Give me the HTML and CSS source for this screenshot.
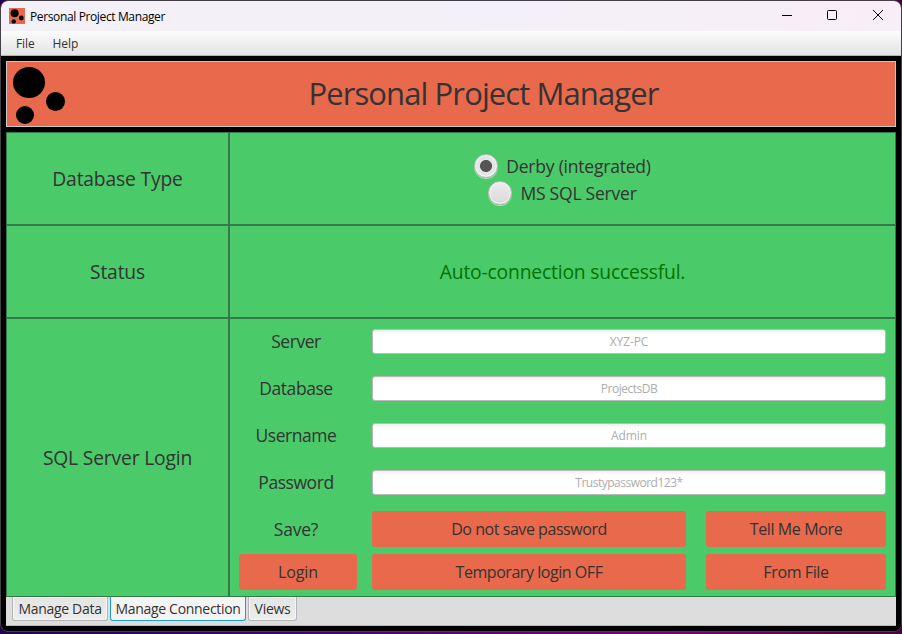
FILE: index.html
```html
<!DOCTYPE html>
<html lang="en">
<head>
<meta charset="utf-8">
<title>Personal Project Manager</title>
<link rel="stylesheet" href="styles.css">
</head>
<body>
<div class="window">
  <header class="titlebar">
    <svg class="app-icon" width="16" height="16" viewBox="0 0 16 16"><rect width="16" height="16" fill="#e8694b"/><circle cx="5.6" cy="5.3" r="4"/><circle cx="12.3" cy="10" r="2.4"/><circle cx="4.7" cy="13.4" r="2.2"/></svg>
    <span class="app-name">Personal Project Manager</span>
    <div class="controls">
      <svg width="46" height="30" viewBox="0 0 46 30"><path d="M18 14.5h10" stroke="#000"/></svg>
      <svg width="46" height="30" viewBox="0 0 46 30"><rect x="17.5" y="9.5" width="9" height="9" rx="1" fill="none" stroke="#000"/></svg>
      <svg width="46" height="30" viewBox="0 0 46 30"><path d="M17 9l10 10M27 9l-10 10" stroke="#000"/></svg>
    </div>
  </header>
  <nav class="menubar"><span>File</span><span>Help</span></nav>
  <main class="content">
    <div class="banner">
      <svg class="logo" width="62" height="64" viewBox="0 0 62 64"><ellipse cx="22" cy="20.5" rx="16" ry="15.5"/><circle cx="48.5" cy="39.5" r="9.5"/><circle cx="18" cy="53" r="9"/></svg>
      <h1>Personal Project Manager</h1>
    </div>
    <div class="panel">
      <div class="cell"><span>Database Type</span></div>
      <div class="cell radios">
        <div class="radio"><i class="dot on"></i><span>Derby (integrated)</span></div>
        <div class="radio"><i class="dot"></i><span>MS SQL Server</span></div>
      </div>
      <div class="cell"><span>Status</span></div>
      <div class="cell ok"><span>Auto-connection successful.</span></div>
      <div class="cell"><span>SQL Server Login</span></div>
      <div class="cell form">
        <div class="label"><span>Server</span></div><div class="field"><span>XYZ-PC</span></div>
        <div class="label"><span>Database</span></div><div class="field tight"><span>ProjectsDB</span></div>
        <div class="label"><span>Username</span></div><div class="field"><span>Admin</span></div>
        <div class="label"><span>Password</span></div><div class="field tight"><span>Trustypassword123*</span></div>
        <div class="label tall"><span>Save?</span></div>
        <div class="button"><span>Do not save password</span></div>
        <div class="button last"><span>Tell Me More</span></div>
        <div class="button login"><span>Login</span></div>
        <div class="button"><span>Temporary login OFF</span></div>
        <div class="button last"><span>From File</span></div>
      </div>
    </div>
    <div class="tabs">
      <div class="tab data"><span>Manage Data</span></div>
      <div class="tab active"><span>Manage Connection</span></div>
      <div class="tab views"><span>Views</span></div>
    </div>
  </main>
</div>
</body>
</html>
```
FILE: styles.css
```css
* { box-sizing: border-box; }
body {
  margin: 0;
  width: 902px;
  height: 634px;
  overflow: hidden;
  font-family: "Open Sans", "Noto Sans", sans-serif;
  color: #333;
  background: linear-gradient(90deg, #25004f, #45006d 35%, #750070 75%, #4a003d);
}
span { white-space: nowrap; }
svg { display: block; }
.window {
  width: 902px;
  height: 632px;
  border: 1px solid #454047;
  border-radius: 8px;
  overflow: hidden;
  background: #000;
}
.titlebar {
  display: flex;
  align-items: center;
  height: 30px;
  padding-left: 8px;
  background: linear-gradient(90deg, #f3f0f8, #f3f0f8 50%, #f8eef7);
  color: #000;
  font-size: 12px;
}
.app-name { margin-left: 5px; letter-spacing: -.37px; }
.controls { display: flex; margin: 0 -1px 0 auto; }
.menubar {
  display: flex;
  align-items: center;
  gap: 18px;
  height: 25px;
  padding-left: 15px;
  background: linear-gradient(#fcfcfc, #e3e3e3);
  border-bottom: 1px solid #b5b5b5;
  font-size: 12px;
  letter-spacing: -.1px;
}
.content { padding: 5px; }
.banner {
  display: flex;
  width: 890px;
  height: 66px;
  border: 1px solid #c8c8c8;
  background: #e8694b;
}
.banner h1 {
  flex: 1;
  margin: 0;
  padding-left: 3px;
  text-align: center;
  font-size: 31px;
  font-weight: 400;
  line-height: 63px;
  letter-spacing: -.9px;
}
.panel {
  display: grid;
  grid-template: 93px 93px 279px / 223px 667px;
  width: 890px;
  margin-top: 5px;
  background: #4bca6a;
}
.cell {
  display: flex;
  align-items: center;
  justify-content: center;
  border: 1px solid #35794a;
  font-size: 19.3px;
  letter-spacing: -.18px;
}
.ok { color: #007300; }
.radios { flex-direction: column; gap: 2px; padding-top: 1px; font-size: 17.5px; letter-spacing: -.22px; }
.radio { display: flex; align-items: center; gap: 8px; height: 25px; }
.dot {
  width: 24px;
  height: 24px;
  border: 1px solid #bdbdbd;
  border-radius: 50%;
  background: linear-gradient(#ececec, #d9d9d9);
  box-shadow: inset 0 0 0 1px #f5f5f5, 0 1px 0 #b9dfc3;
}
.dot.on { background: radial-gradient(circle, #555 5.6px, #e5e5e5 6.4px); }
.form {
  display: grid;
  grid-template: 47px 47px 47px 41px 43px 36px / 118px 314px 185px;
  column-gap: 15px;
  align-content: start;
  align-items: start;
  justify-content: start;
  padding: 10px 9px 0;
  font-size: 17.5px;
  letter-spacing: -.45px;
}
.label, .button, .field { display: flex; align-items: center; justify-content: center; }
.label { height: 24px; padding-right: 4px; }
.label.tall { height: 35px; letter-spacing: -.2px; }
.field {
  grid-column: 2 / 4;
  height: 25px;
  border: 1px solid #bababa;
  border-radius: 3px;
  background: linear-gradient(#eee, #fff 4px);
  color: #adadad;
  font-size: 12px;
  letter-spacing: -.1px;
}
.field.tight { letter-spacing: -.5px; }
.button {
  height: 36px;
  padding-bottom: 1px;
  border-radius: 3px;
  background: #e8694b;
  font-size: 16px;
}
.button.last { margin-left: 5px; letter-spacing: -.38px; }
.button.login { letter-spacing: -.1px; }
.tabs {
  display: flex;
  width: 890px;
  height: 29px;
  padding-left: 6px;
  background: #ddd;
  border-bottom: 1px solid #bababa;
  font-size: 14px;
  letter-spacing: -.3px;
}
.tab {
  display: flex;
  align-items: center;
  justify-content: center;
  height: 24px;
  border: 1px solid #b5b5b5;
  border-top: 0;
  border-radius: 0 0 3px 3px;
  background: linear-gradient(#e4e4e4, #ededed);
  box-shadow: inset 0 0 0 1px #f6f6f6;
}
.data { width: 96px; }
.active { width: 136px; margin: 0 2px; border-color: #1b9ed0; background: #f4f4f4; }
.views { width: 49px; }
```
